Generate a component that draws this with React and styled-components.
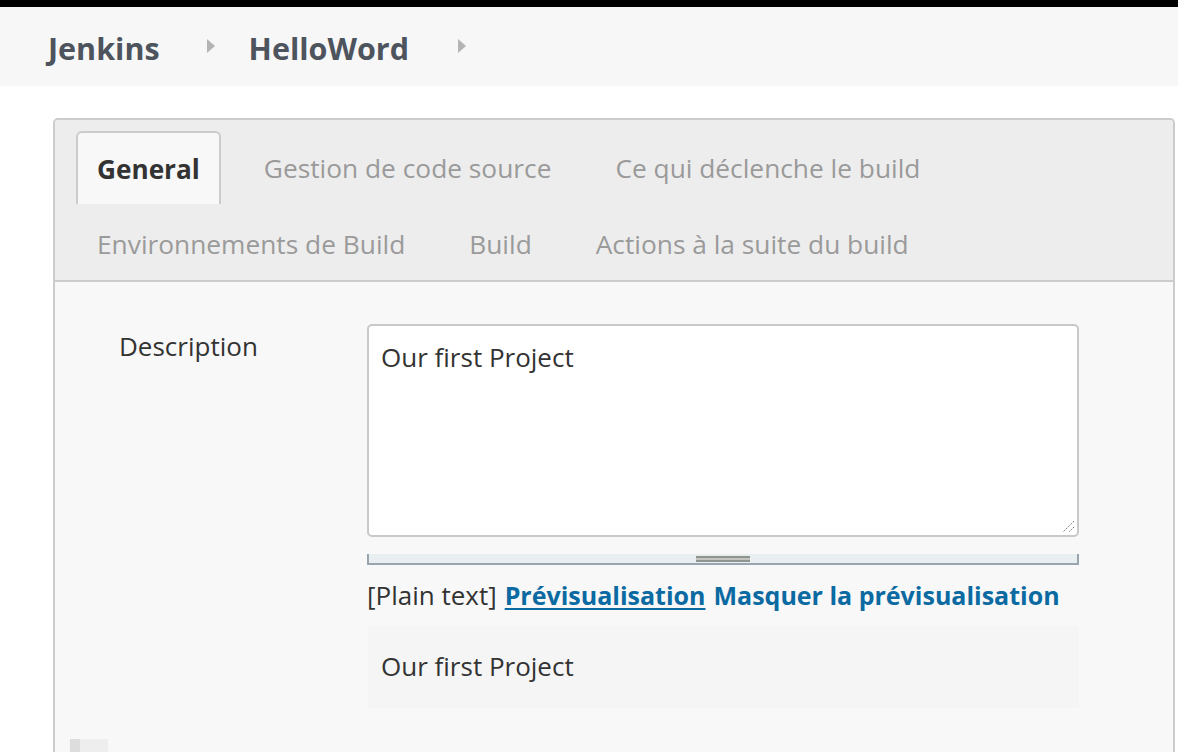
import React from "react";
import styled, { createGlobalStyle } from "styled-components";

const Global = createGlobalStyle`
  html, body { margin: 0; padding: 0; background: #ffffff; }
  body { font-family: "Open Sans", "Noto Sans", sans-serif; color: #333; overflow: hidden; }
  * { box-sizing: border-box; }
`;

const Page = styled.div`
  width: 1178px;
  height: 752px;
  overflow: hidden;
  display: flex;
  flex-direction: column;
`;

const TopStrip = styled.div`
  height: 7px;
  background: #000;
  flex: none;
`;

const Breadcrumbs = styled.nav`
  height: 79px;
  flex: none;
  background: #f7f7f7;
  display: flex;
  align-items: center;
  padding-left: 48px;
  padding-top: 2px;
`;

const Crumb = styled.a`
  font-size: 30.5px;
  font-weight: 700;
  color: #4d545d;
  text-decoration: none;
`;

const Chevron = styled.span`
  width: 0;
  height: 0;
  border-top: 7px solid transparent;
  border-bottom: 7px solid transparent;
  border-left: 8px solid #b4b4b4;
  margin: 0 ${(p) => p.$right}px 0 ${(p) => p.$left}px;
  position: relative;
  top: -2px;
`;

const Main = styled.main`
  flex: 1;
  padding: 32px 3px 0 53px;
  display: flex;
  min-height: 0;
`;

const Panel = styled.section`
  flex: 1;
  border: 2px solid #cccccc;
  border-bottom: none;
  border-radius: 5px 5px 0 0;
  background: #f8f8f8;
  display: flex;
  flex-direction: column;
  overflow: hidden;
`;

const TabBar = styled.div`
  background: #ededed;
  border-bottom: 2px solid #cccccc;
  padding: 11px 21px 0 21px;
  display: flex;
  flex-wrap: wrap;
  row-gap: 3px;
`;

const Tab = styled.div`
  height: 73px;
  padding: 0 ${(p) => (p.$active ? 19 : 21)}px;
  margin-right: 22px;
  display: flex;
  align-items: center;
  font-size: ${(p) => (p.$active ? 26.2 : 26.3)}px;
  white-space: nowrap;
  color: ${(p) => (p.$active ? "#333333" : "#9a9a9a")};
  font-weight: ${(p) => (p.$active ? 700 : 400)};
  background: ${(p) => (p.$active ? "#f8f8f8" : "transparent")};
  border: ${(p) => (p.$active ? "2px solid #cccccc" : "none")};
  border-bottom: none;
  border-radius: 6px 6px 0 0;
`;

const Content = styled.div`
  padding: 42px 0 0 64px;
  display: grid;
  grid-template-columns: 248px 712px;
  align-items: start;
`;

const Label = styled.div`
  font-size: 26px;
  color: #333;
  padding-top: 4px;
`;

const Field = styled.div`
  display: flex;
  flex-direction: column;
`;

const TextBox = styled.div`
  height: 213px;
  background: #fff;
  border: 2px solid #c9c9c9;
  border-radius: 5px;
  padding: 16px 12px;
  font-size: 26px;
  line-height: 1.2;
  color: #333;
  position: relative;
`;

const ResizeCorner = styled.svg`
  position: absolute;
  right: 2px;
  bottom: 2px;
`;

const Resizer = styled.div`
  margin-top: 17px;
  height: 11px;
  background: #e9eef1;
  border-left: 2px solid #9aa6af;
  border-right: 2px solid #9aa6af;
  border-bottom: 2px solid #9aa6af;
  display: flex;
  justify-content: center;
  padding-top: 2px;
`;

const Grip = styled.div`
  width: 54px;
  height: 6px;
  background: #c4c4c0;
  border-top: 2px solid #8f958e;
  border-bottom: 2px solid #8f958e;
`;

const Toolbar = styled.div`
  margin-top: 12px;
  font-size: 26px;
  color: #333;
  white-space: nowrap;
  display: flex;
  align-items: baseline;
  gap: 8px;
`;

const Link = styled.a`
  color: #0b6aa2;
  font-weight: 700;
  font-size: 25px;
  text-decoration: ${(p) => (p.$underline ? "underline" : "none")};
  text-decoration-thickness: 2px;
  text-underline-offset: 3px;
`;

const Preview = styled.div`
  margin-top: 13px;
  margin-left: 1px;
  height: 82px;
  background: #f5f5f5;
  padding: 0 13px 3px;
  display: flex;
  align-items: center;
  font-size: 26px;
  color: #333;
`;

const Footer = styled.div`
  padding: 31px 0 0 15px;
`;

const Stub = styled.div`
  width: 38px;
  height: 14px;
  background: #eeeeee;
  border-left: 10px solid #dddddd;
`;

const tabs = [
  "General",
  "Gestion de code source",
  "Ce qui déclenche le build",
  "Environnements de Build",
  "Build",
  "Actions à la suite du build",
];

export default function App() {
  return (
    <Page>
      <Global />
      <TopStrip />
      <Breadcrumbs>
        <Crumb>Jenkins</Crumb>
        <Chevron $left={47} $right={34} />
        <Crumb>HelloWord</Crumb>
        <Chevron $left={49} $right={0} />
      </Breadcrumbs>
      <Main>
        <Panel>
          <TabBar>
            {tabs.map((t, i) => (
              <Tab key={t} $active={i === 0}>
                {t}
              </Tab>
            ))}
          </TabBar>
          <Content>
            <Label>Description</Label>
            <Field>
              <TextBox>
                Our first Project
                <ResizeCorner width="14" height="14" viewBox="0 0 14 14">
                  <path d="M13 2 L2 13 M13 8 L8 13" stroke="#777" strokeWidth="1" strokeDasharray="1.5 1" />
                </ResizeCorner>
              </TextBox>
              <Resizer>
                <Grip />
              </Resizer>
              <Toolbar>
                <span>[Plain text]</span>
                <Link href="#" $underline>Prévisualisation</Link>
                <Link href="#">Masquer la prévisualisation</Link>
              </Toolbar>
              <Preview>Our first Project</Preview>
            </Field>
          </Content>
          <Footer>
            <Stub />
          </Footer>
        </Panel>
      </Main>
    </Page>
  );
}
